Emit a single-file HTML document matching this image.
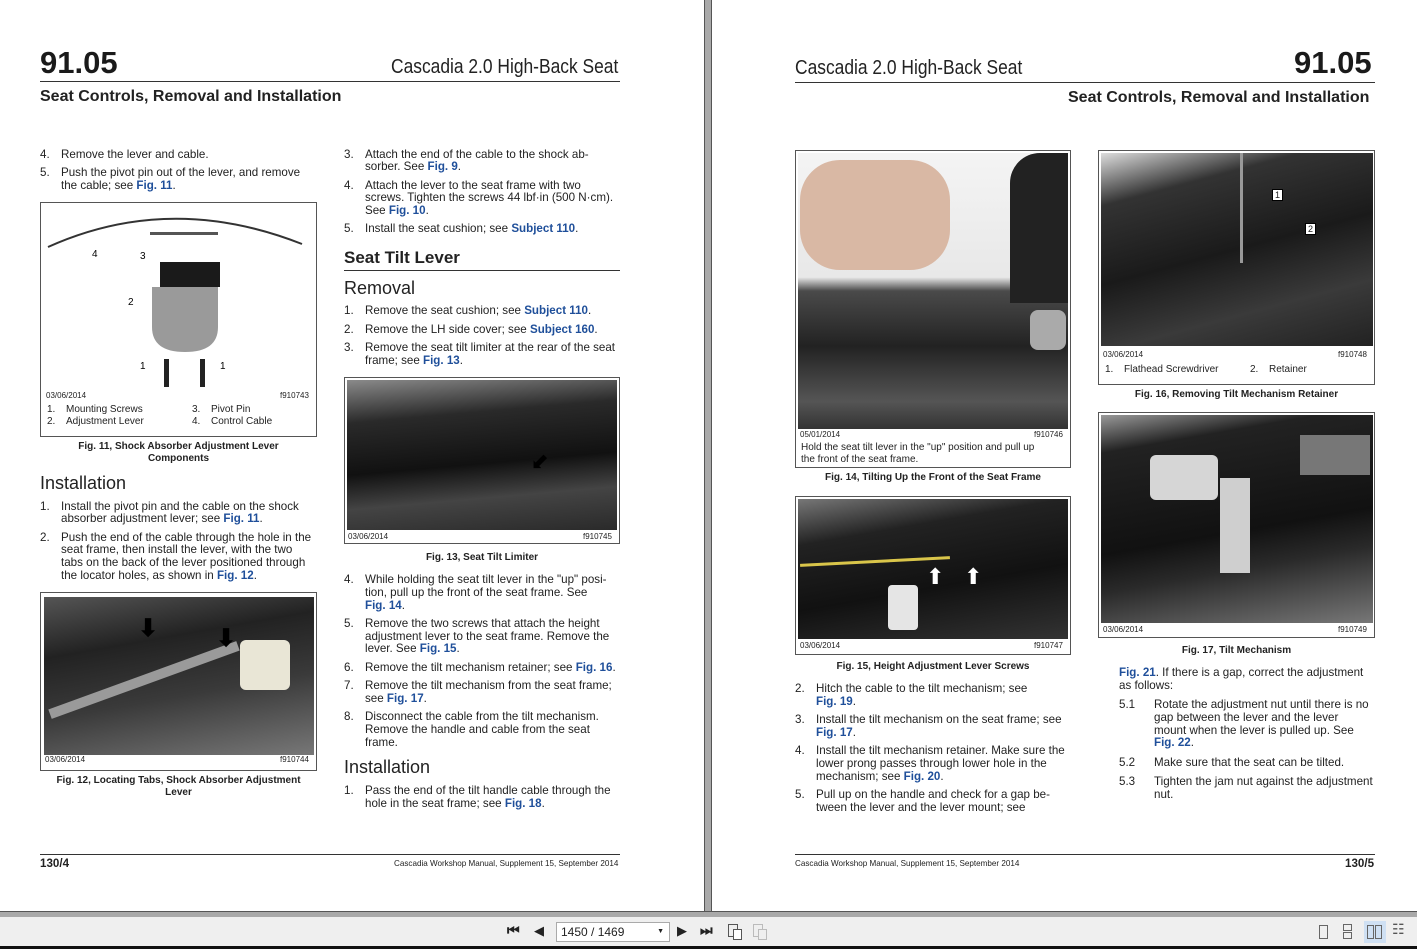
<!DOCTYPE html>
<html><head><meta charset="utf-8"><style>
*{margin:0;padding:0;box-sizing:border-box}
body{width:1417px;height:949px;position:relative;overflow:hidden;background:#fff;font-family:"Liberation Sans",sans-serif;color:#222}
.t{position:absolute;font-size:11.6px;line-height:13px;white-space:nowrap;color:#222}
.t i{font-style:normal;display:inline-block;width:21px}
.l{color:#1f4f9a;font-weight:bold}
.hr{position:absolute;height:1px;background:#333}
.box{position:absolute;border:1px solid #555;background:#fff}
.ph{position:absolute;background:linear-gradient(160deg,#3a3a3a,#111 45%,#2a2a2a 70%,#555)}
.sm{position:absolute;font-size:8px;line-height:9px;color:#222}
.cap{position:absolute;font-size:10px;line-height:12px;font-weight:bold;text-align:center;color:#222}
.h1{position:absolute;font-size:31px;font-weight:bold;color:#1a1a1a;line-height:32px}
.h2{position:absolute;font-size:20px;color:#222;line-height:22px;transform:scaleX(.87);transform-origin:left}
.h3{position:absolute;font-size:15px;font-weight:bold;line-height:17px}
.h4{position:absolute;font-size:18px;line-height:20px}
</style></head><body>

<!-- gutter -->
<div style="position:absolute;left:704px;top:0;width:8px;height:912px;background:#a9a9a9;border-left:1px solid #555;border-right:1px solid #555"></div>
<div style="position:absolute;left:0;top:911px;width:1417px;height:6px;background:#a9a9a9;border-top:1px solid #555"></div>
<div style="position:absolute;left:0;top:917px;width:1417px;height:29px;background:#efefef"></div>
<div style="position:absolute;left:0;top:946px;width:1417px;height:3px;background:#111"></div>

<!-- PAGE LEFT -->
<div class="h1" style="left:40px;top:47px">91.05</div>
<div class="h2" style="left:391px;top:56px">Cascadia 2.0 High-Back Seat</div>
<div class="hr" style="left:40px;top:81px;width:580px"></div>
<div class="t" style="left:40px;top:88px;font-size:16px;line-height:17px;font-weight:bold">Seat Controls, Removal and Installation</div>

<div class="t" style="left:40px;top:148px"><i>4.</i>Remove the lever and cable.</div>
<div class="t" style="left:40px;top:166px"><i>5.</i>Push the pivot pin out of the lever, and remove</div>
<div class="t" style="left:61px;top:179px">the cable; see <span class="l">Fig. 11</span>.</div>

<div class="box" style="left:40px;top:202px;width:277px;height:235px"></div>
<svg style="position:absolute;left:40px;top:202px" width="277" height="235">
<path d="M8 45 Q130 -10 262 42" stroke="#333" stroke-width="2" fill="none"/>
<rect x="110" y="30" width="68" height="3" fill="#555"/>
<path d="M120 60 h60 v25 h-60z" fill="#1a1a1a"/>
<path d="M112 85 h66 v40 q0 25 -33 25 q-33 0 -33 -25z" fill="#9a9a9a"/>
<rect x="124" y="157" width="5" height="28" fill="#222"/><rect x="160" y="157" width="5" height="28" fill="#222"/>
<text x="52" y="55" font-size="10" font-family="Liberation Sans">4</text>
<text x="100" y="57" font-size="10" font-family="Liberation Sans">3</text>
<text x="88" y="103" font-size="10" font-family="Liberation Sans">2</text>
<text x="100" y="167" font-size="10" font-family="Liberation Sans">1</text>
<text x="180" y="167" font-size="10" font-family="Liberation Sans">1</text>
</svg>
<div class="sm" style="left:46px;top:391px">03/06/2014</div>
<div class="sm" style="left:280px;top:391px">f910743</div>
<div class="t" style="left:47px;top:404px;font-size:10px;line-height:12px"><i style="width:19px">1.</i>Mounting Screws</div>
<div class="t" style="left:47px;top:416px;font-size:10px;line-height:12px"><i style="width:19px">2.</i>Adjustment Lever</div>
<div class="t" style="left:192px;top:404px;font-size:10px;line-height:12px"><i style="width:19px">3.</i>Pivot Pin</div>
<div class="t" style="left:192px;top:416px;font-size:10px;line-height:12px"><i style="width:19px">4.</i>Control Cable</div>
<div class="cap" style="left:40px;top:441px;width:277px">Fig. 11, Shock Absorber Adjustment Lever<br>Components</div>

<div class="h4" style="left:40px;top:473px">Installation</div>
<div class="t" style="left:40px;top:500px"><i>1.</i>Install the pivot pin and the cable on the shock</div>
<div class="t" style="left:61px;top:512px">absorber adjustment lever; see <span class="l">Fig. 11</span>.</div>
<div class="t" style="left:40px;top:531px"><i>2.</i>Push the end of the cable through the hole in the</div>
<div class="t" style="left:61px;top:543px">seat frame, then install the lever, with the two</div>
<div class="t" style="left:61px;top:556px">tabs on the back of the lever positioned through</div>
<div class="t" style="left:61px;top:569px">the locator holes, as shown in <span class="l">Fig. 12</span>.</div>

<div class="box" style="left:40px;top:592px;width:277px;height:179px"></div>
<div class="ph" style="left:44px;top:597px;width:270px;height:158px;background:linear-gradient(170deg,#555,#222 30%,#3a3a3a 60%,#777)"></div>
<div style="position:absolute;left:240px;top:640px;width:50px;height:50px;background:#e9e6d6;border-radius:6px"></div>
<div style="position:absolute;left:44px;top:675px;width:200px;height:10px;background:#9a9a9a;transform:rotate(-20deg)"></div>
<div class="t" style="left:138px;top:622px;font-size:24px;font-weight:bold;color:#000">⬇</div>
<div class="t" style="left:216px;top:632px;font-size:24px;font-weight:bold;color:#000">⬇</div>
<div class="sm" style="left:45px;top:755px;background:#fff">03/06/2014</div>
<div class="sm" style="left:280px;top:755px">f910744</div>
<div class="cap" style="left:40px;top:775px;width:277px">Fig. 12, Locating Tabs, Shock Absorber Adjustment<br>Lever</div>

<div class="t" style="left:344px;top:148px"><i>3.</i>Attach the end of the cable to the shock ab-</div>
<div class="t" style="left:365px;top:160px">sorber. See <span class="l">Fig. 9</span>.</div>
<div class="t" style="left:344px;top:179px"><i>4.</i>Attach the lever to the seat frame with two</div>
<div class="t" style="left:365px;top:191px">screws. Tighten the screws 44 lbf·in (500 N·cm).</div>
<div class="t" style="left:365px;top:204px">See <span class="l">Fig. 10</span>.</div>
<div class="t" style="left:344px;top:222px"><i>5.</i>Install the seat cushion; see <span class="l">Subject 110</span>.</div>
<div class="h3" style="left:344px;top:249px;font-size:17px">Seat Tilt Lever</div>
<div class="hr" style="left:344px;top:270px;width:276px"></div>
<div class="h4" style="left:344px;top:278px">Removal</div>
<div class="t" style="left:344px;top:304px"><i>1.</i>Remove the seat cushion; see <span class="l">Subject 110</span>.</div>
<div class="t" style="left:344px;top:323px"><i>2.</i>Remove the LH side cover; see <span class="l">Subject 160</span>.</div>
<div class="t" style="left:344px;top:341px"><i>3.</i>Remove the seat tilt limiter at the rear of the seat</div>
<div class="t" style="left:365px;top:354px">frame; see <span class="l">Fig. 13</span>.</div>

<div class="box" style="left:344px;top:377px;width:276px;height:167px"></div>
<div class="ph" style="left:347px;top:380px;width:270px;height:150px;background:linear-gradient(175deg,#8a8a8a,#2a2a2a 25%,#111 55%,#444 75%,#2a2a2a)"></div>
<div class="t" style="left:530px;top:455px;font-size:22px;color:#000;transform:rotate(-45deg)">⬅</div>
<div class="sm" style="left:348px;top:532px">03/06/2014</div>
<div class="sm" style="left:583px;top:532px">f910745</div>
<div class="cap" style="left:344px;top:552px;width:276px">Fig. 13, Seat Tilt Limiter</div>

<div class="t" style="left:344px;top:573px"><i>4.</i>While holding the seat tilt lever in the "up" posi-</div>
<div class="t" style="left:365px;top:586px">tion, pull up the front of the seat frame. See</div>
<div class="t" style="left:365px;top:599px"><span class="l">Fig. 14</span>.</div>
<div class="t" style="left:344px;top:617px"><i>5.</i>Remove the two screws that attach the height</div>
<div class="t" style="left:365px;top:630px">adjustment lever to the seat frame. Remove the</div>
<div class="t" style="left:365px;top:642px">lever. See <span class="l">Fig. 15</span>.</div>
<div class="t" style="left:344px;top:661px"><i>6.</i>Remove the tilt mechanism retainer; see <span class="l">Fig. 16</span>.</div>
<div class="t" style="left:344px;top:679px"><i>7.</i>Remove the tilt mechanism from the seat frame;</div>
<div class="t" style="left:365px;top:692px">see <span class="l">Fig. 17</span>.</div>
<div class="t" style="left:344px;top:710px"><i>8.</i>Disconnect the cable from the tilt mechanism.</div>
<div class="t" style="left:365px;top:723px">Remove the handle and cable from the seat</div>
<div class="t" style="left:365px;top:736px">frame.</div>
<div class="h4" style="left:344px;top:757px">Installation</div>
<div class="t" style="left:344px;top:784px"><i>1.</i>Pass the end of the tilt handle cable through the</div>
<div class="t" style="left:365px;top:797px">hole in the seat frame; see <span class="l">Fig. 18</span>.</div>

<div class="hr" style="left:40px;top:854px;width:580px"></div>
<div class="t" style="left:40px;top:857px;font-weight:bold">130/4</div>
<div class="t" style="left:394px;top:859px;font-size:8.1px;line-height:9px">Cascadia Workshop Manual, Supplement 15, September 2014</div>

<!-- PAGE RIGHT -->
<div class="h2" style="left:795px;top:57px">Cascadia 2.0 High-Back Seat</div>
<div class="h1" style="left:1294px;top:47px">91.05</div>
<div class="hr" style="left:795px;top:82px;width:580px"></div>
<div class="t" style="left:1068px;top:89px;font-size:16px;line-height:17px;font-weight:bold">Seat Controls, Removal and Installation</div>

<div class="box" style="left:795px;top:150px;width:276px;height:318px"></div>
<div class="ph" style="left:798px;top:153px;width:270px;height:276px;background:linear-gradient(180deg,#f4f4f4 0%,#e8e8e8 45%,#4a4a4a 50%,#222 70%,#555 90%,#333)"></div>
<div style="position:absolute;left:1010px;top:153px;width:58px;height:150px;background:#222;border-radius:30px 0 0 0"></div>
<div style="position:absolute;left:800px;top:160px;width:150px;height:110px;background:#d9b8a4;border-radius:40px"></div>
<div style="position:absolute;left:1030px;top:310px;width:36px;height:40px;background:#aaa;border-radius:8px"></div>
<div class="sm" style="left:800px;top:430px">05/01/2014</div>
<div class="sm" style="left:1034px;top:430px">f910746</div>
<div class="t" style="left:801px;top:442px;font-size:10px;line-height:12px">Hold the seat tilt lever in the "up" position and pull up<br>the front of the seat frame.</div>
<div class="cap" style="left:795px;top:472px;width:276px">Fig. 14, Tilting Up the Front of the Seat Frame</div>

<div class="box" style="left:795px;top:496px;width:276px;height:159px"></div>
<div class="ph" style="left:798px;top:499px;width:270px;height:140px;background:linear-gradient(170deg,#777,#222 25%,#111 60%,#333)"></div>
<div style="position:absolute;left:800px;top:560px;width:150px;height:3px;background:#d9c54a;transform:rotate(-3deg)"></div>
<div style="position:absolute;left:888px;top:585px;width:30px;height:45px;background:#e5e5e5;border-radius:4px"></div>
<div class="t" style="left:926px;top:570px;font-size:22px;color:#fff">⬆</div>
<div class="t" style="left:964px;top:570px;font-size:22px;color:#fff">⬆</div>
<div class="sm" style="left:800px;top:641px">03/06/2014</div>
<div class="sm" style="left:1034px;top:641px">f910747</div>
<div class="cap" style="left:795px;top:661px;width:276px">Fig. 15, Height Adjustment Lever Screws</div>

<div class="t" style="left:795px;top:682px"><i>2.</i>Hitch the cable to the tilt mechanism; see</div>
<div class="t" style="left:816px;top:695px"><span class="l">Fig. 19</span>.</div>
<div class="t" style="left:795px;top:713px"><i>3.</i>Install the tilt mechanism on the seat frame; see</div>
<div class="t" style="left:816px;top:726px"><span class="l">Fig. 17</span>.</div>
<div class="t" style="left:795px;top:744px"><i>4.</i>Install the tilt mechanism retainer. Make sure the</div>
<div class="t" style="left:816px;top:757px">lower prong passes through lower hole in the</div>
<div class="t" style="left:816px;top:770px">mechanism; see <span class="l">Fig. 20</span>.</div>
<div class="t" style="left:795px;top:788px"><i>5.</i>Pull up on the handle and check for a gap be-</div>
<div class="t" style="left:816px;top:801px">tween the lever and the lever mount; see</div>

<div class="box" style="left:1098px;top:150px;width:277px;height:235px"></div>
<div class="ph" style="left:1101px;top:153px;width:272px;height:193px;background:linear-gradient(165deg,#ddd,#333 20%,#1a1a1a 50%,#3a3a3a 75%,#222)"></div>
<div style="position:absolute;left:1240px;top:153px;width:3px;height:110px;background:#999"></div>
<div style="position:absolute;left:1272px;top:189px;width:11px;height:12px;background:#fff;border:1px solid #000;font-size:9px;line-height:10px;text-align:center">1</div>
<div style="position:absolute;left:1305px;top:223px;width:11px;height:12px;background:#fff;border:1px solid #000;font-size:9px;line-height:10px;text-align:center">2</div>
<div class="sm" style="left:1103px;top:350px">03/06/2014</div>
<div class="sm" style="left:1338px;top:350px">f910748</div>
<div class="t" style="left:1105px;top:364px;font-size:10px;line-height:12px"><i style="width:19px">1.</i>Flathead Screwdriver</div>
<div class="t" style="left:1250px;top:364px;font-size:10px;line-height:12px"><i style="width:19px">2.</i>Retainer</div>
<div class="cap" style="left:1098px;top:389px;width:277px">Fig. 16, Removing Tilt Mechanism Retainer</div>

<div class="box" style="left:1098px;top:412px;width:277px;height:226px"></div>
<div class="ph" style="left:1101px;top:415px;width:272px;height:208px;background:linear-gradient(170deg,#999,#222 15%,#111 55%,#2a2a2a 70%,#777)"></div>
<div style="position:absolute;left:1150px;top:455px;width:68px;height:45px;background:#d6d6d6;border-radius:6px"></div>
<div style="position:absolute;left:1220px;top:478px;width:30px;height:95px;background:#cfcfcf"></div>
<div style="position:absolute;left:1300px;top:435px;width:70px;height:40px;background:#777"></div>
<div class="sm" style="left:1103px;top:625px">03/06/2014</div>
<div class="sm" style="left:1338px;top:625px">f910749</div>
<div class="cap" style="left:1098px;top:645px;width:277px">Fig. 17, Tilt Mechanism</div>

<div class="t" style="left:1119px;top:666px"><span class="l">Fig. 21</span>. If there is a gap, correct the adjustment</div>
<div class="t" style="left:1119px;top:679px">as follows:</div>
<div class="t" style="left:1119px;top:698px">5.1</div>
<div class="t" style="left:1154px;top:698px">Rotate the adjustment nut until there is no</div>
<div class="t" style="left:1154px;top:711px">gap between the lever and the lever</div>
<div class="t" style="left:1154px;top:724px">mount when the lever is pulled up. See</div>
<div class="t" style="left:1154px;top:736px"><span class="l">Fig. 22</span>.</div>
<div class="t" style="left:1119px;top:756px">5.2</div>
<div class="t" style="left:1154px;top:756px">Make sure that the seat can be tilted.</div>
<div class="t" style="left:1119px;top:775px">5.3</div>
<div class="t" style="left:1154px;top:775px">Tighten the jam nut against the adjustment</div>
<div class="t" style="left:1154px;top:788px">nut.</div>

<div class="hr" style="left:795px;top:854px;width:580px"></div>
<div class="t" style="left:795px;top:859px;font-size:8.1px;line-height:9px">Cascadia Workshop Manual, Supplement 15, September 2014</div>
<div class="t" style="left:1345px;top:857px;font-weight:bold">130/5</div>

<!-- toolbar -->
<div class="t" style="left:507px;top:924px;font-size:14px;color:#222;font-weight:bold">⏮</div>
<div class="t" style="left:534px;top:924px;font-size:13px">◀</div>
<div style="position:absolute;left:556px;top:922px;width:114px;height:20px;background:#fff;border:1px solid #aaa;font-size:12px;line-height:18px;padding-left:4px">1450 / 1469<span style="position:absolute;right:5px;font-size:7px">▼</span></div>
<div class="t" style="left:677px;top:924px;font-size:13px">▶</div>
<div class="t" style="left:700px;top:924px;font-size:14px;font-weight:bold">⏭</div>
<div style="position:absolute;left:728px;top:924px;width:10px;height:13px;border:1px solid #555"></div>
<div style="position:absolute;left:733px;top:929px;width:9px;height:11px;border:1px solid #555;background:#fff"></div>
<div style="position:absolute;left:753px;top:924px;width:10px;height:13px;border:1px solid #bbb"></div>
<div style="position:absolute;left:758px;top:929px;width:9px;height:11px;border:1px solid #bbb;background:#efefef"></div>
<div style="position:absolute;left:1319px;top:925px;width:9px;height:14px;border:1px solid #666"></div>
<div style="position:absolute;left:1343px;top:924px;width:9px;height:7px;border:1px solid #666"></div>
<div style="position:absolute;left:1343px;top:932px;width:9px;height:7px;border:1px solid #666"></div>
<div style="position:absolute;left:1364px;top:921px;width:22px;height:22px;background:#cfe0f3"></div>
<div style="position:absolute;left:1367px;top:925px;width:7px;height:14px;border:1px solid #666"></div>
<div style="position:absolute;left:1375px;top:925px;width:7px;height:14px;border:1px solid #666"></div>
<div class="t" style="left:1392px;top:923px;font-size:14px;color:#555">☷</div>
</body></html>
